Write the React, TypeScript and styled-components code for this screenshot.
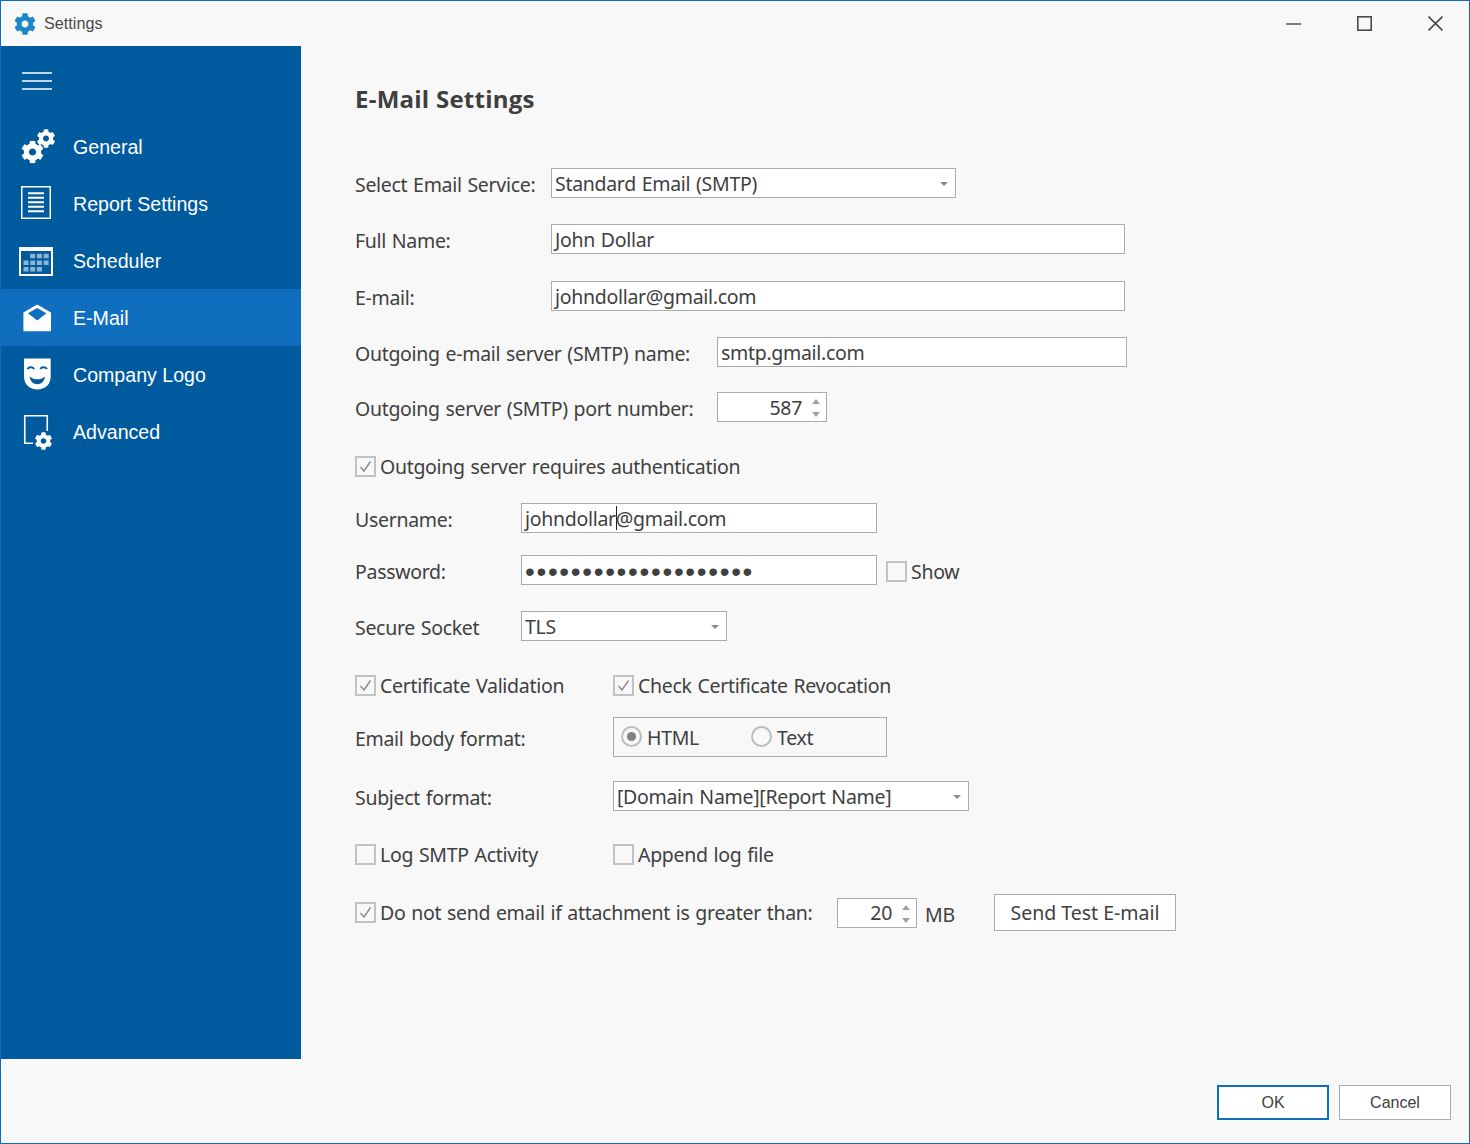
import React from "react";
import styled, { createGlobalStyle } from "styled-components";
import { FaCog } from "react-icons/fa";

const GlobalStyle = createGlobalStyle`
  html, body { margin: 0; padding: 0; background: #f8f8f8; }
  * { box-sizing: border-box; }
`;

const WindowFrame = styled.div`
  width: 1470px;
  height: 1144px;
  border: 1px solid #0f6cbd;
  background: #f8f8f8;
  display: grid;
  grid-template-columns: 300px 1fr;
  grid-template-rows: 45px 1013px 1fr;
  font-family: "Liberation Sans", Arial, sans-serif;
  overflow: hidden;
`;

const TitleBar = styled.header`
  grid-column: 1 / 3;
  display: flex;
  align-items: center;
  padding-left: 13px;
  color: #4a4a4a;
  font-size: 16.2px;
`;

const TitleIcon = styled(FaCog)`
  width: 22px;
  height: 22px;
  color: #1a86c8;
  margin-right: 8px;
`;

const TitleText = styled.span`
  margin-right: auto;
`;

const WindowControl = styled.button`
  width: 71px;
  height: 45px;
  border: 0;
  padding: 0 0 0 4px;
  background: none;
  display: flex;
  align-items: center;
  justify-content: center;
  & svg { display: block; }
`;

const WindowControls = styled.div`
  display: flex;
`;

const Sidebar = styled.nav`
  background: #005a9e;
  display: flex;
  flex-direction: column;
`;

const MenuButton = styled.div`
  height: 72px;
  padding: 26px 0 0 21px;
  & svg { display: block; }
`;

const NavItem = styled.div<{ $active?: boolean }>`
  height: 57px;
  display: flex;
  align-items: center;
  background: ${(p) => (p.$active ? "#106ebe" : "transparent")};
  color: #ffffff;
  font-size: 19.6px;
`;

const NavIcon = styled.span`
  width: 72px;
  height: 57px;
  display: flex;
  align-items: center;
  padding-left: 18px;
  & svg { display: block; }
`;

const NavLabel = styled.span`
  padding-top: 2px;
`;

const Main = styled.main`
  padding: 38px 0 0 54px;
  display: flex;
  flex-direction: column;
  color: #404040;
  font-family: "Noto Sans", Tahoma, sans-serif;
  font-size: 19.5px;
  letter-spacing: -0.3px;
  word-spacing: 1px;
`;

const Heading = styled.h1`
  margin: 0;
  height: 30px;
  line-height: 30px;
  font-family: "Open Sans", Tahoma, sans-serif;
  font-size: 24px;
  font-weight: 700;
  letter-spacing: 0.25px;
  word-spacing: 0;
  color: #3f3f3f;
`;

const Row = styled.div<{ $top: number; $height: number }>`
  display: flex;
  align-items: center;
  flex: none;
  margin-top: ${(p) => p.$top}px;
  height: ${(p) => p.$height}px;
`;

const Label = styled.span<{ $width: number }>`
  flex: none;
  width: ${(p) => p.$width}px;
  padding-top: 3px;
  white-space: nowrap;
`;

const Field = styled.div<{ $width: number }>`
  flex: none;
  position: relative;
  width: ${(p) => p.$width}px;
  height: 30px;
  display: flex;
  align-items: center;
  padding: 0 3px;
  background: #ffffff;
  border: 1px solid #ababab;
  white-space: pre;
`;

const FieldSpin = styled(Field)`
  justify-content: flex-end;
  padding-right: 24px;
`;

const Caret = styled.span`
  display: inline-block;
  width: 0;
  height: 24px;
  margin-right: -1px;
  border-left: 1px solid #222222;
`;

const ComboArrow = styled.span`
  position: absolute;
  right: 7px;
  top: 13px;
  width: 0;
  height: 0;
  border-left: 4.5px solid transparent;
  border-right: 4.5px solid transparent;
  border-top: 4px solid #8a8a8a;
`;

const SpinArrow = styled.span<{ $down?: boolean }>`
  position: absolute;
  right: 6px;
  ${(p) => (p.$down ? "top: 19px;" : "top: 6px;")}
  width: 0;
  height: 0;
  border-left: 4.5px solid transparent;
  border-right: 4.5px solid transparent;
  ${(p) =>
    p.$down
      ? "border-top: 5px solid #a0a0a0;"
      : "border-bottom: 5px solid #a0a0a0;"}
`;

const Dots = styled.span`
  font-family: "Liberation Sans", sans-serif;
  font-size: 28px;
  letter-spacing: 1.65px;
  line-height: 28px;
  padding-top: 3px;
  color: #404040;
`;

const CheckWrap = styled.label<{ $width?: number; $drop?: boolean }>`
  flex: none;
  display: flex;
  align-items: center;
  gap: 4px;
  white-space: nowrap;
  ${(p) => (p.$width ? `width: ${p.$width}px;` : "")}
  ${(p) => (p.$drop ? "margin-top: 3px;" : "")}
`;

const CheckBox = styled.span`
  flex: none;
  width: 21px;
  height: 21px;
  border: 2px solid #c2c2c2;
  background: #f8f8f8;
  display: flex;
  align-items: center;
  justify-content: center;
`;

const RadioGroup = styled.div`
  flex: none;
  width: 274px;
  height: 40px;
  border: 1px solid #ababab;
  display: flex;
  align-items: center;
  padding-left: 7px;
`;

const RadioWrap = styled.label<{ $width: number }>`
  display: flex;
  align-items: center;
  gap: 5px;
  width: ${(p) => p.$width}px;
  margin-top: -2px;
`;

const RadioText = styled.span`
  padding-top: 2px;
`;

const RadioCircle = styled.span<{ $on?: boolean }>`
  flex: none;
  width: 21px;
  height: 21px;
  border: 2px solid #bdbdbd;
  border-radius: 50%;
  display: flex;
  align-items: center;
  justify-content: center;
  &::after {
    content: "";
    width: 9px;
    height: 9px;
    border-radius: 50%;
    background: ${(p) => (p.$on ? "#808080" : "transparent")};
  }
`;

const Gap = styled.span<{ $width: number }>`
  flex: none;
  width: ${(p) => p.$width}px;
`;

const TestButton = styled.button`
  flex: none;
  width: 182px;
  height: 37px;
  padding: 0;
  background: #ffffff;
  border: 1px solid #ababab;
  color: #404040;
  font: inherit;
`;

const Footer = styled.footer`
  grid-column: 1 / 3;
  display: flex;
  justify-content: flex-end;
  align-items: flex-start;
  gap: 10px;
  padding: 26px 18px 0 0;
`;

const DialogButton = styled.button<{ $primary?: boolean }>`
  width: 112px;
  height: 35px;
  padding: 0;
  background: #ffffff;
  border: ${(p) => (p.$primary ? "2px solid #106ebe" : "1px solid #ababab")};
  color: #404040;
  font-family: "Liberation Sans", Arial, sans-serif;
  font-size: 16px;
`;

function Check({
  checked,
  drop,
  label,
  width,
}: {
  checked?: boolean;
  drop?: boolean;
  label: string;
  width?: number;
}) {
  return (
    <CheckWrap $width={width} $drop={drop}>
      <CheckBox>
        {checked && (
          <svg width="13" height="13" viewBox="0 0 13 13" fill="none" stroke="#8c8c8c" strokeWidth="1.4">
            <path d="M1.5 7 L5 11 L11.5 1.5" />
          </svg>
        )}
      </CheckBox>
      {label}
    </CheckWrap>
  );
}

const GearsIcon = () => (
  <svg width="36" height="36" viewBox="0 0 36 36">
    <FaCog x="2" y="11.5" size={23} color="#ffffff" />
    <FaCog x="17.5" y="0" size={19} color="#ffffff" />
  </svg>
);

const ReportIcon = () => (
  <svg width="36" height="36" viewBox="0 0 36 36" fill="none" stroke="#ffffff">
    <rect x="2.75" y="0.75" width="28.5" height="31.5" strokeWidth="1.5" />
    <path d="M9 7.2H25M9 11.7H25M9 16.2H25M9 20.7H25M9 25.2H25" strokeWidth="2" />
  </svg>
);

const SCHEDULE_CELLS = [
  [11.2, 10.8], [17.9, 10.8], [24.6, 10.8],
  [4.5, 17.5], [11.2, 17.5], [17.9, 17.5], [24.6, 17.5],
  [4.5, 24], [11.2, 24], [17.9, 24],
];

const SchedulerIcon = () => (
  <svg width="36" height="36" viewBox="0 0 36 36">
    <rect x="1" y="5" width="32" height="27" fill="none" stroke="#ffffff" strokeWidth="2" />
    <rect x="1" y="5" width="32" height="3" fill="#ffffff" />
    <g fill="#ffffff" opacity="0.55">
      {SCHEDULE_CELLS.map(([x, y]) => (
        <rect key={`${x}-${y}`} x={x} y={y} width="5" height="4.5" />
      ))}
    </g>
  </svg>
);

const MailIcon = () => (
  <svg width="36" height="36" viewBox="0 0 36 36" fill="#ffffff">
    <path d="M18.2 4.5 L32 12.5 V31.2 H4.4 V12.5 Z M18.2 8 L9 13.2 L18.2 20.5 L27.4 13.2 Z" fillRule="evenodd" />
  </svg>
);

const MaskIcon = () => (
  <svg width="36" height="36" viewBox="0 0 36 36">
    <path d="M5 1.5 H31.7 V19.5 C31.7 27.5 25.8 32.5 18.3 32.5 C10.9 32.5 5 27.5 5 19.5 Z" fill="#ffffff" />
    <path d="M8.5 12 C10 9.8 13.5 9.8 15.2 12 M21.2 12 C22.8 9.8 26.3 9.8 28 12" fill="none" stroke="#005a9e" strokeWidth="2" />
    <path d="M10.5 19.5 C13 21.6 15.5 22.3 18.3 22.3 C21.1 22.3 23.6 21.6 26 19.5 C25 25 22 27.2 18.3 27.2 C14.6 27.2 11.5 25 10.5 19.5 Z" fill="#005a9e" />
  </svg>
);

const AdvancedIcon = () => (
  <svg width="36" height="38" viewBox="0 0 36 38">
    <path d="M14 30.25 H5.75 V2.75 H28.25 V18" fill="none" stroke="#ffffff" strokeWidth="1.6" />
    <FaCog x="15.5" y="19" size={18} color="#ffffff" />
  </svg>
);

export default function App() {
  return (
    <>
      <GlobalStyle />
      <WindowFrame>
        <TitleBar>
          <TitleIcon />
          <TitleText>Settings</TitleText>
          <WindowControls>
            <WindowControl aria-label="Minimize">
              <svg width="15" height="15" viewBox="0 0 15 15" stroke="#4a4a4a" strokeWidth="1.4">
                <path d="M0 8H15" />
              </svg>
            </WindowControl>
            <WindowControl aria-label="Maximize">
              <svg width="15" height="15" viewBox="0 0 15 15" fill="none" stroke="#4a4a4a" strokeWidth="1.6">
                <rect x="0.8" y="0.8" width="13.4" height="13.4" />
              </svg>
            </WindowControl>
            <WindowControl aria-label="Close">
              <svg width="15" height="15" viewBox="0 0 15 15" stroke="#4a4a4a" strokeWidth="1.6">
                <path d="M0.5 0.5L14.5 14.5M14.5 0.5L0.5 14.5" />
              </svg>
            </WindowControl>
          </WindowControls>
        </TitleBar>

        <Sidebar>
          <MenuButton>
            <svg width="30" height="18" viewBox="0 0 30 18" stroke="#ffffff" strokeWidth="1.4">
              <path d="M0 1H30M0 9H30M0 17H30" />
            </svg>
          </MenuButton>
          <NavItem><NavIcon><GearsIcon /></NavIcon><NavLabel>General</NavLabel></NavItem>
          <NavItem><NavIcon><ReportIcon /></NavIcon><NavLabel>Report Settings</NavLabel></NavItem>
          <NavItem><NavIcon><SchedulerIcon /></NavIcon><NavLabel>Scheduler</NavLabel></NavItem>
          <NavItem $active><NavIcon><MailIcon /></NavIcon><NavLabel>E-Mail</NavLabel></NavItem>
          <NavItem><NavIcon><MaskIcon /></NavIcon><NavLabel>Company Logo</NavLabel></NavItem>
          <NavItem><NavIcon><AdvancedIcon /></NavIcon><NavLabel>Advanced</NavLabel></NavItem>
        </Sidebar>

        <Main>
          <Heading>E-Mail Settings</Heading>
          <Row $top={54} $height={30}>
            <Label $width={196}>Select Email Service:</Label>
            <Field $width={405}>Standard Email (SMTP)<ComboArrow /></Field>
          </Row>
          <Row $top={26} $height={30}>
            <Label $width={196}>Full Name:</Label>
            <Field $width={574}>John Dollar</Field>
          </Row>
          <Row $top={27} $height={30}>
            <Label $width={196}>E-mail:</Label>
            <Field $width={574}>johndollar@gmail.com</Field>
          </Row>
          <Row $top={26} $height={30}>
            <Label $width={362}>Outgoing e-mail server (SMTP) name:</Label>
            <Field $width={410}>smtp.gmail.com</Field>
          </Row>
          <Row $top={25} $height={30}>
            <Label $width={362}>Outgoing server (SMTP) port number:</Label>
            <FieldSpin $width={110}>587<SpinArrow /><SpinArrow $down /></FieldSpin>
          </Row>
          <Row $top={34} $height={21}>
            <Check checked label="Outgoing server requires authentication" />
          </Row>
          <Row $top={26} $height={30}>
            <Label $width={166}>Username:</Label>
            <Field $width={356}>johndollar<Caret />@gmail.com</Field>
          </Row>
          <Row $top={22} $height={30}>
            <Label $width={166}>Password:</Label>
            <Field $width={356}><Dots>{"•".repeat(20)}</Dots></Field>
            <Gap $width={9} />
            <Check drop label="Show" />
          </Row>
          <Row $top={26} $height={30}>
            <Label $width={166}>Secure Socket</Label>
            <Field $width={206}>TLS<ComboArrow /></Field>
          </Row>
          <Row $top={34} $height={21}>
            <Check checked width={258} label="Certificate Validation" />
            <Check checked label="Check Certificate Revocation" />
          </Row>
          <Row $top={21} $height={40}>
            <Label $width={258}>Email body format:</Label>
            <RadioGroup>
              <RadioWrap $width={130}><RadioCircle $on /><RadioText>HTML</RadioText></RadioWrap>
              <RadioWrap $width={100}><RadioCircle /><RadioText>Text</RadioText></RadioWrap>
            </RadioGroup>
          </Row>
          <Row $top={24} $height={30}>
            <Label $width={258}>Subject format:</Label>
            <Field $width={356}>[Domain Name][Report Name]<ComboArrow /></Field>
          </Row>
          <Row $top={33} $height={21}>
            <Check width={258} label="Log SMTP Activity" />
            <Check label="Append log file" />
          </Row>
          <Row $top={29} $height={37}>
            <Check checked width={482} label="Do not send email if attachment is greater than:" />
            <FieldSpin $width={80}>20<SpinArrow /><SpinArrow $down /></FieldSpin>
            <Gap $width={8} />
            <Label $width={69}>MB</Label>
            <TestButton>Send Test E-mail</TestButton>
          </Row>
        </Main>

        <Footer>
          <DialogButton $primary>OK</DialogButton>
          <DialogButton>Cancel</DialogButton>
        </Footer>
      </WindowFrame>
    </>
  );
}
